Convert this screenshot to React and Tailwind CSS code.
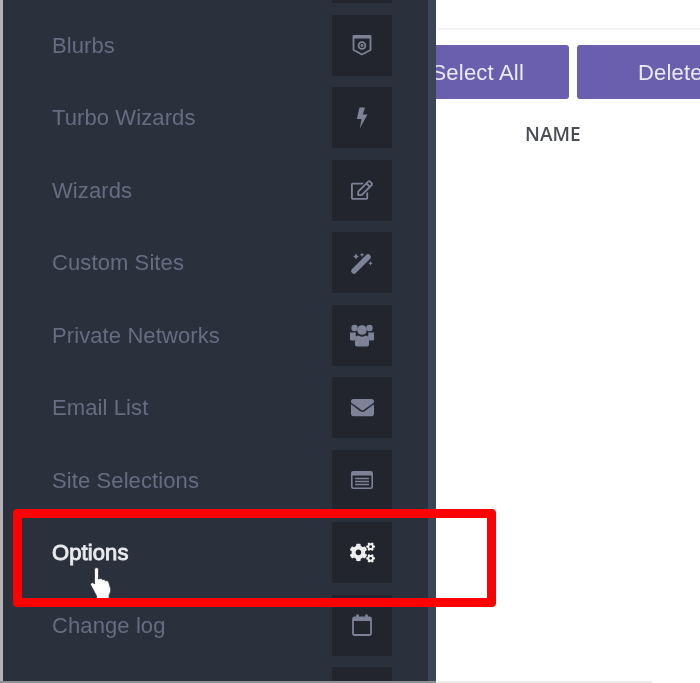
import React from "react";
import { FaRegEdit, FaEnvelope, FaCogs } from "react-icons/fa";

// shield shaped badge next to Blurbs
const BlurbIcon = ({ className = "" }) => (
  <svg viewBox="0 0 20 22" className={className} fill="none">
    <path d="M1.5 2h17v14l-8.500 4.500L1.500 16z" stroke="currentColor" strokeWidth="1.800" strokeLinejoin="round" />
    <path d="M1.500 2h17v2.500h-17z" fill="currentColor" />
    <circle cx="10" cy="11.500" r="3.400" stroke="currentColor" strokeWidth="1.800" />
    <circle cx="10" cy="11.500" r="1.400" fill="currentColor" />
  </svg>
);

const BoltIcon = ({ className = "" }) => (
  <svg viewBox="0 0 12 22" className={className}>
    <path d="M3.500 0.500h5.500L6.800 7.500H11.500L3.800 21.500 5.500 12H0.800z" fill="currentColor" />
  </svg>
);

const WandIcon = ({ className = "" }) => (
  <svg viewBox="0 0 22 22" className={className} fill="none">
    <path d="M3 19 17 5" stroke="currentColor" strokeWidth="5.500" strokeLinecap="round" />
    <path d="M5 1.500l1 2 2 1-2 1-1 2-1-2-2-1 2-1zM11 0.500l.7 1.500 1.500.7-1.500.7-.7 1.600-.7-1.600-1.500-.7 1.500-.7zM19.500 9l.7 1.500 1.500.7-1.500.7-.7 1.600-.7-1.600-1.500-.7 1.500-.7z" fill="currentColor" />
  </svg>
);

const UsersIcon = ({ className = "" }) => (
  <svg viewBox="0 0 24 23" className={className} fill="currentColor">
    <circle cx="4.500" cy="4" r="3.200" />
    <circle cx="19.500" cy="4" r="3.200" />
    <circle cx="12" cy="6" r="4.800" />
    <path d="M0 8.500h6c-.8 1.500-.5 3.500 1 5-1.500.8-2 1.700-2.300 3H1.500C.5 16.500 0 15.800 0 15z" />
    <path d="M24 8.500h-6c.8 1.500.5 3.500-1 5 1.500.8 2 1.700 2.300 3h3.200c1 0 1.500-.7 1.500-1.500z" />
    <path d="M8 11.500c2.400 1.500 5.600 1.500 8 0 1.800.6 3 2 3 4.500v4.500c0 1.200-.8 2-2 2H7c-1.200 0-2-.8-2-2V16c0-2.500 1.200-3.900 3-4.500z" />
  </svg>
);

const ListIcon = ({ className = "" }) => (
  <svg viewBox="0 0 22 18" className={className} fill="none">
    <rect x="0.800" y="0.800" width="20.400" height="16.400" rx="1.500" stroke="currentColor" strokeWidth="1.600" />
    <path d="M1 1h20v3.500H1z" fill="currentColor" />
    <path d="M4 7.500h14M4 10.500h14M4 13.500h14" stroke="currentColor" strokeWidth="1.600" />
  </svg>
);

const CalendarIcon = ({ className = "" }) => (
  <svg viewBox="0 0 20 22" className={className} fill="none">
    <path d="M2.500 3.500h15c.8 0 1.500.7 1.500 1.500v14.500c0 .8-.7 1.500-1.500 1.500h-15c-.8 0-1.500-.7-1.500-1.500V5c0-.8.700-1.500 1.500-1.500z" stroke="currentColor" strokeWidth="1.800" />
    <path d="M1 4h18v3H1z" fill="currentColor" />
    <path d="M5.500 0.500v4M14.500 0.500v4" stroke="currentColor" strokeWidth="2.600" />
  </svg>
);

const items = [
  { label: "", icon: null },
  { label: "Blurbs", icon: <BlurbIcon className="w-[20px] h-[22px]" /> },
  { label: "Turbo Wizards", icon: <BoltIcon className="w-[12px] h-[22px]" /> },
  { label: "Wizards", icon: <FaRegEdit className="w-[22px] h-[20px]" /> },
  { label: "Custom Sites", icon: <WandIcon className="w-[22px] h-[22px]" /> },
  { label: "Private Networks", icon: <UsersIcon className="w-[24px] h-[23px]" /> },
  { label: "Email List", icon: <FaEnvelope className="w-[23px] h-[23px]" /> },
  { label: "Site Selections", icon: <ListIcon className="w-[22px] h-[18px]" /> },
  { label: "Options", icon: <FaCogs className="w-[25px] h-[25px]" />, active: true },
  { label: "Change log", icon: <CalendarIcon className="w-[20px] h-[22px]" /> },
  { label: "", icon: null },
];

const Row = ({ label, icon, active }) => (
  <div className="flex items-start h-[72.5px] shrink-0">
    <div className={`flex-1 pl-[49px] h-[61px] flex items-center text-[22px] tracking-[0.1px] ${active ? "text-[#e9eaee] [-webkit-text-stroke:0.9px_#e9eaee]" : "text-[#666d80]"}`}>
      {label}
    </div>
    <div className={`w-[60px] h-[61px] mr-[36px] flex items-center justify-center bg-[#22252e] ${active ? "text-[#eeeeee]" : "text-[#7d8296]"}`}>
      {icon}
    </div>
  </div>
);

export default function App() {
  return (
    <div className="relative w-[700px] h-[683px] overflow-hidden bg-white flex blur-[0.6px] font-['Liberation_Sans',Arial,sans-serif]">
      <div className="w-[3px] bg-[#b4b4b6] shrink-0" />
      <aside className="relative z-10 w-[433px] shrink-0 bg-[#2a303c] border-r-[8px] border-[#3a4655] flex flex-col overflow-hidden">
        <div className="-mt-[58px] flex flex-col">
          {items.map((item, i) => (
            <Row key={i} {...item} />
          ))}
        </div>
      </aside>

      <main className="flex-1 min-w-0 pt-[28px] pl-[2px]">
        <div className="h-[2px] bg-[#f3f3f3]" />
        <div className="flex gap-[8px] mt-[15px] -ml-[55px]">
          <button className="h-[54px] w-[186px] shrink-0 rounded-[3px] bg-[#6a5fae] text-[#ece9f6] text-[22px] tracking-[0.2px] text-right pr-[45px]">Select All</button>
          <button className="h-[54px] w-[186px] shrink-0 rounded-[3px] bg-[#6a5fae] text-[#ece9f6] text-[22px] tracking-[0.2px] text-left pl-[61px]">Delete</button>
        </div>
        <div className="mt-[23px] ml-[87px] text-[19px] leading-[24px] font-semibold text-[#4a4d55] font-['Open_Sans',sans-serif]">NAME</div>
      </main>

      {/* bottom edge of the captured window */}
      <div className="absolute left-0 w-[436px] bottom-0 h-[2px] bg-[#8f9094] z-20" />
      <div className="absolute left-[436px] w-[216px] bottom-0 h-[2px] bg-[#ececec] z-20" />

      {/* red highlight drawn over the screenshot */}
      <div className="absolute z-30 left-[13px] top-[509px] w-[483px] h-[98px] border-[9.5px] border-[#fe0000] rounded-[4px]" />

      {/* mouse cursor */}
      <svg viewBox="0 0 24 32" className="absolute z-20 left-[90px] top-[567px] w-[24px] h-[32px]">
        <path d="M4.500 2.500c0-2.400 4-2.400 4 0V12l1.500-.4c1.300-.3 2.300.3 2.500 1.300 1.100-.6 2.600-.2 3 1 1.300-.6 2.900.1 3.300 1.500l1.800 6.100c.5 2.500-.4 4.500-1.500 6.500v5H6.500v-4L1 18.500c-1.300-1.800.8-3.700 2.600-2.400l.9.900z" fill="#ffffff" stroke="#30343e" strokeWidth="0.800" strokeLinejoin="round" />
      </svg>
    </div>
  );
}
